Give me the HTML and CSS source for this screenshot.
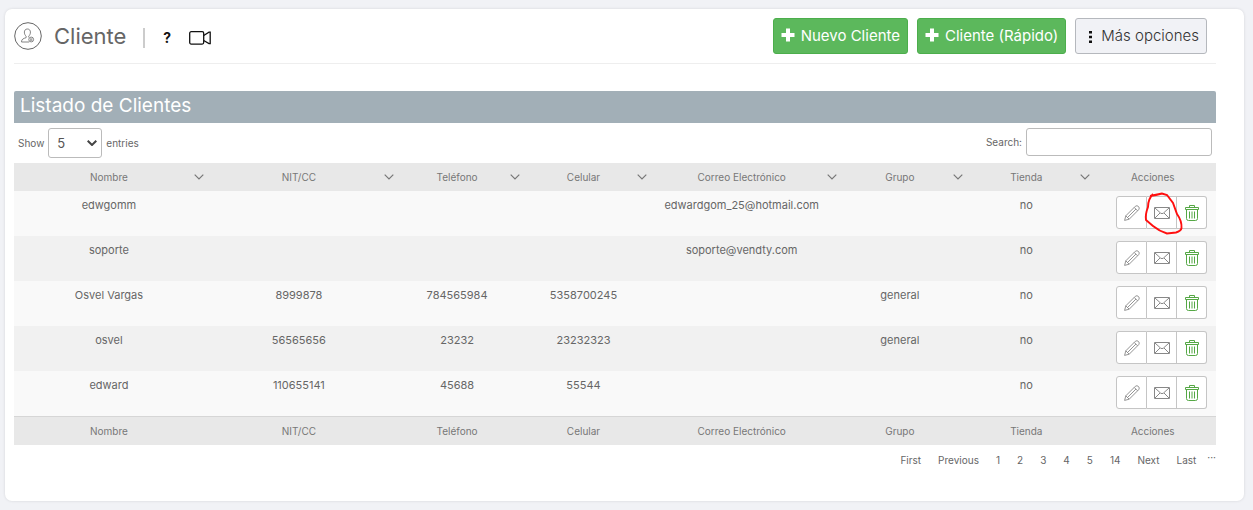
FILE: index.html
```html
<!DOCTYPE html>
<html lang="es">
<head>
<meta charset="utf-8">
<meta name="viewport" content="width=device-width, initial-scale=1">
<title>Cliente</title>
<link rel="stylesheet" href="styles.css">
</head>
<body>
<svg class="symbols" aria-hidden="true">
  <symbol id="pencil" viewBox="0 0 16 16"><path d="M.6 15.400 1.800 10.800 11.300 1.300Q13 0 14.500 1.500T14.700 4.700L5.200 14.200ZM1.800 10.800 5.200 14.200M10.200 2.400 13.600 5.800M3.500 12.500 12 4"/></symbol>
  <symbol id="mail" viewBox="0 0 16 12"><path d="M.5.5h15v11H.5ZM1 1l5.500 5Q8 7.400 9.500 6L15 1M1 11l5-5M15 11l-5-5"/></symbol>
  <symbol id="trash" viewBox="0 0 14 16"><path d="M.5 2.500h13v2H.5ZM4.500 2.500v-2h5v2M1.500 4.500v9q0 2 2 2h7q2 0 2-2v-9M4.500 6.500v7M7 6.500v7M9.500 6.500v7"/></symbol>
  <symbol id="chevron" viewBox="0 0 10 6"><path d="M.7.7 5 5 9.300.7"/></symbol>
</svg>
<main class="card">
  <header class="page-head">
    <svg class="avatar" viewBox="0 0 28 28" aria-hidden="true"><circle cx="14" cy="14" r="13.300"/><path class="person" d="M13.400 7c-4 0-3.600 5.500-1.300 7.100v1.600c-2.500.8-4.600 1.200-4.600 4.300h7.700M13.400 7c4 0 3.600 5.500 1.300 7.100v1.300"/><circle class="person" cx="17.200" cy="17.500" r="2.400"/><path class="person" d="M16 17h2.400M16 18.200h2.400"/></svg>
    <h1 class="page-title">Cliente</h1>
    <span class="divider"></span>
    <button class="icon-button help" type="button">?</button>
    <button class="icon-button" type="button" aria-label="Video"><svg class="video" viewBox="0 0 22 14"><rect x=".7" y=".7" width="14" height="12.400" rx="1.500"/><path d="M14.700 4.500 20 1.200h1.200v11.400H20L14.700 9.500"/></svg></button>
    <div class="page-actions">
      <button class="btn btn-green" type="button"><svg class="plus" viewBox="0 0 14 14" aria-hidden="true"><path d="M7 .5v13M.5 7h13"/></svg>Nuevo Cliente</button>
      <button class="btn btn-green" type="button"><svg class="plus" viewBox="0 0 14 14" aria-hidden="true"><path d="M7 .5v13M.5 7h13"/></svg>Cliente (Rápido)</button>
      <button class="btn btn-plain" type="button"><svg class="dots" viewBox="0 0 3 12" aria-hidden="true"><path d="M0 0h3v2.500H0zM0 4.700h3v2.500H0zM0 9.400h3V12H0z"/></svg>Más opciones</button>
    </div>
  </header>
  <h2 class="panel-title">Listado de Clientes</h2>
  <div class="tools">
    <label class="tool">Show <span class="select-wrap"><select class="length"><option>5</option><option>10</option><option>25</option></select><svg class="caret"><use href="#chevron"/></svg></span> entries</label>
    <label class="tool">Search: <input class="search" type="text"></label>
  </div>
  <table class="clients">
    <colgroup><col class="wide"><col class="wide"><col><col><col class="wide"><col><col><col></colgroup>
    <thead><tr>
      <th>Nombre<svg class="sort"><use href="#chevron"/></svg></th>
      <th>NIT/CC<svg class="sort"><use href="#chevron"/></svg></th>
      <th>Teléfono<svg class="sort"><use href="#chevron"/></svg></th>
      <th>Celular<svg class="sort"><use href="#chevron"/></svg></th>
      <th>Correo Electrónico<svg class="sort"><use href="#chevron"/></svg></th>
      <th>Grupo<svg class="sort"><use href="#chevron"/></svg></th>
      <th>Tienda<svg class="sort"><use href="#chevron"/></svg></th>
      <th>Acciones</th>
    </tr></thead>
    <tbody>
      <tr><td>edwgomm</td><td></td><td></td><td></td><td>edwardgom_25@hotmail.com</td><td></td><td>no</td><td class="actions"><div class="group"><button type="button" aria-label="Editar"><svg class="pencil"><use href="#pencil"/></svg></button><button type="button" aria-label="Correo"><svg class="mail"><use href="#mail"/></svg></button><button type="button" aria-label="Eliminar"><svg class="trash"><use href="#trash"/></svg></button><svg class="mark" viewBox="0 0 40 46" aria-hidden="true"><path d="M7 5Q13 4 19 2.500L24 4 30 12 34 23Q39 30 38.500 37 38 40 33 41.500L24 42.500Q16 40 10 35L3 29Q2 24 5 16 5 8 10 3"/></svg></div></td></tr>
      <tr><td>soporte</td><td></td><td></td><td></td><td>soporte@vendty.com</td><td></td><td>no</td><td class="actions"><div class="group"><button type="button" aria-label="Editar"><svg class="pencil"><use href="#pencil"/></svg></button><button type="button" aria-label="Correo"><svg class="mail"><use href="#mail"/></svg></button><button type="button" aria-label="Eliminar"><svg class="trash"><use href="#trash"/></svg></button></div></td></tr>
      <tr><td>Osvel Vargas</td><td>8999878</td><td>784565984</td><td>5358700245</td><td></td><td>general</td><td>no</td><td class="actions"><div class="group"><button type="button" aria-label="Editar"><svg class="pencil"><use href="#pencil"/></svg></button><button type="button" aria-label="Correo"><svg class="mail"><use href="#mail"/></svg></button><button type="button" aria-label="Eliminar"><svg class="trash"><use href="#trash"/></svg></button></div></td></tr>
      <tr><td>osvel</td><td>56565656</td><td>23232</td><td>23232323</td><td></td><td>general</td><td>no</td><td class="actions"><div class="group"><button type="button" aria-label="Editar"><svg class="pencil"><use href="#pencil"/></svg></button><button type="button" aria-label="Correo"><svg class="mail"><use href="#mail"/></svg></button><button type="button" aria-label="Eliminar"><svg class="trash"><use href="#trash"/></svg></button></div></td></tr>
      <tr><td>edward</td><td>110655141</td><td>45688</td><td>55544</td><td></td><td></td><td>no</td><td class="actions"><div class="group"><button type="button" aria-label="Editar"><svg class="pencil"><use href="#pencil"/></svg></button><button type="button" aria-label="Correo"><svg class="mail"><use href="#mail"/></svg></button><button type="button" aria-label="Eliminar"><svg class="trash"><use href="#trash"/></svg></button></div></td></tr>
    </tbody>
    <tfoot><tr><th>Nombre</th><th>NIT/CC</th><th>Teléfono</th><th>Celular</th><th>Correo Electrónico</th><th>Grupo</th><th>Tienda</th><th>Acciones</th></tr></tfoot>
  </table>
  <nav class="pager"><a href="#">First</a><a href="#">Previous</a><a href="#">1</a><a href="#">2</a><a href="#">3</a><a href="#">4</a><a href="#">5</a><a href="#">14</a><a href="#">Next</a><a href="#">Last</a><span class="more">···</span></nav>
</main>
</body>
</html>
```
FILE: styles.css
```css
* { box-sizing: border-box; }
body {
  margin: 0;
  padding: 9px 9px 9px 5px;
  min-height: 100vh;
  display: flex;
  background: #f1f2f6;
  color: #666;
  font-family: Inter, "Open Sans", sans-serif;
  font-size: 11px;
}
svg { fill: none; stroke: currentColor; flex: none; }
button, select, input { font-family: inherit; margin: 0; }
.symbols { position: absolute; width: 0; height: 0; }
.card {
  flex: 1;
  padding: 9px 28px 20px 9px;
  background: #fff;
  border-radius: 7px;
  box-shadow: 0 0 3px rgba(0, 0, 0, .12);
}
.page-head {
  display: flex;
  align-items: center;
  padding-bottom: 9px;
  border-bottom: 1px solid #eee;
  margin-bottom: 27px;
}
.avatar { width: 28px; height: 28px; color: #666; stroke-width: 1; }
.person { stroke-width: .8; }
.page-title { margin: 0 17px 0 12px; font-size: 22px; line-height: 28px; font-weight: 400; color: #666; }
.divider { width: 2px; height: 20px; margin-top: 4px; background: #ccc; }
.icon-button { display: flex; padding: 0; border: 0; background: none; color: #111; margin: 4px 0 0 18px; }
.help { font-size: 14px; line-height: 18px; font-weight: 700; }
.video { width: 22px; height: 14px; stroke-width: 1.3; }
.page-actions { display: flex; gap: 9px; margin-left: auto; padding-right: 9px; }
.btn {
  display: flex;
  align-items: center;
  height: 36px;
  padding: 0 7px 2px;
  border: 1px solid #4cae4c;
  border-radius: 3px;
  font-size: 15px;
  white-space: nowrap;
}
.btn-green { gap: 6px; background: #5cb85c; color: #fff; }
.btn-plain { gap: 9px; padding-left: 13px; background: #f1f2f6; border-color: #b5b8bd; color: #333; font-weight: 300; }
.plus { width: 14px; height: 14px; stroke-width: 4; }
.dots { width: 3px; height: 12px; fill: #111; stroke: none; margin-top: 4px; }
.panel-title {
  margin: 0;
  padding: 0 6px 2px;
  background: #a2afb7;
  border-radius: 2px 2px 0 0;
  color: #fff;
  font-size: 19px;
  line-height: 30px;
  font-weight: 400;
}
.tools { display: flex; justify-content: space-between; align-items: flex-start; padding: 5px 4px; }
.tool { display: flex; align-items: center; gap: 4px; font-size: 10px; }
.select-wrap { display: grid; align-items: center; }
.length {
  grid-area: 1 / 1;
  appearance: none;
  width: 54px;
  height: 30px;
  padding: 0 8px;
  border: 1px solid #bbb;
  border-radius: 3px;
  background: #fff;
  color: #555;
  font-size: 13px;
}
.caret { grid-area: 1 / 1; justify-self: end; margin-right: 5px; width: 10px; height: 6px; stroke-width: 2; color: #444; pointer-events: none; }
.search { width: 186px; height: 28px; border: 1px solid #bbb; border-radius: 3px; }
.clients { width: 100%; table-layout: fixed; border-collapse: collapse; }
.wide { width: 15.8%; }
th { position: relative; height: 28px; padding: 0; background: #e8e8e8; font-size: 10px; font-weight: 400; color: #777; }
tfoot th { height: 29px; border-top: 1px solid #d6d6d6; }
td { height: 45px; padding: 7px 0 0; vertical-align: top; text-align: center; line-height: 15px; }
tbody tr:nth-child(odd) { background: #f9f9f9; }
tbody tr:nth-child(even) { background: #f1f1f1; }
.sort { position: absolute; right: 0; top: 11px; width: 10px; height: 6px; stroke-width: 1.2; }
.actions { padding: 5px 9px 0 0; }
.group { position: relative; display: flex; width: 91px; margin-left: auto; }
.group button {
  display: flex;
  align-items: center;
  justify-content: center;
  flex: 1;
  height: 33px;
  padding: 0;
  border: 1px solid #c5c5c5;
  background: #fff;
  color: #888;
}
.group button + button { border-left: 0; }
.group button:first-child { border-radius: 3px 0 0 3px; }
.group button:nth-child(3) { border-radius: 0 3px 3px 0; }
.pencil { width: 16px; height: 16px; stroke-width: .9; }
.mail { width: 16px; height: 12px; }
.trash { width: 14px; height: 16px; color: #55a845; }
.mark { position: absolute; left: 27px; top: -5px; width: 40px; height: 46px; color: #ff0f0f; stroke-width: 1.9; pointer-events: none; }
.pager { display: flex; flex-wrap: wrap; justify-content: flex-end; gap: 17px; padding-top: 8px; font-size: 10px; line-height: 14px; }
.pager a { color: #666; text-decoration: none; }
.more { margin: -3px 0 0 -6px; }
```
